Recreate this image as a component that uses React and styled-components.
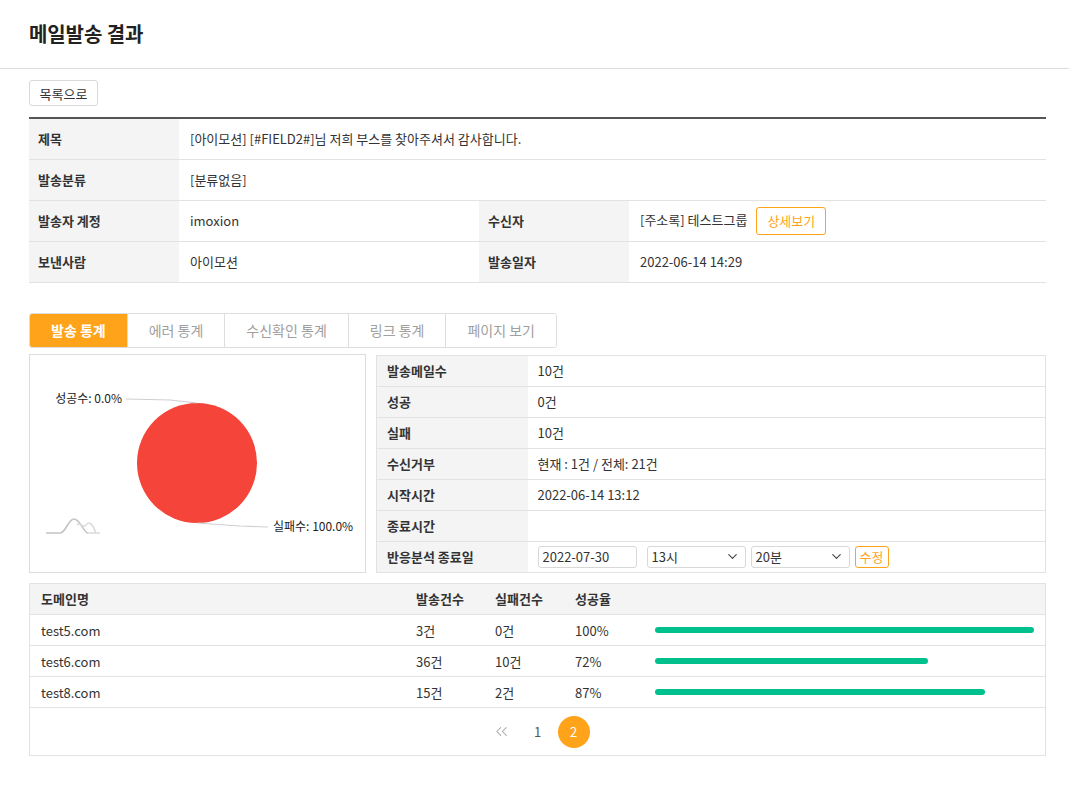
import React from "react";
import styled, { createGlobalStyle } from "styled-components";
import { ChevronDown, ChevronsLeft } from "lucide-react";

const orange = "#ffa31a";
const line = "#e2e2e2";
const labelBg = "#f4f4f4";

const GlobalStyle = createGlobalStyle`
  * { box-sizing: border-box; }
  body {
    margin: 0;
    background: #fff;
    color: #333;
    font-family: "Noto Sans CJK KR", "Noto Sans", sans-serif;
    font-size: 13px;
  }
`;

const domains = [
  { name: "test5.com", sent: "3건", fail: "0건", rate: 100 },
  { name: "test6.com", sent: "36건", fail: "10건", rate: 72 },
  { name: "test8.com", sent: "15건", fail: "2건", rate: 87 },
];

const tabs = ["발송 통계", "에러 통계", "수신확인 통계", "링크 통계", "페이지 보기"];

export default function App() {
  return (
    <>
      <GlobalStyle />
      <Header>
        <Title>메일발송 결과</Title>
      </Header>
      <Main>
        <ListButton>목록으로</ListButton>

        <InfoTable>
          <colgroup>
            <col style={{ width: 150 }} />
            <col style={{ width: 300 }} />
            <col style={{ width: 150 }} />
            <col />
          </colgroup>
          <tbody>
            <tr>
              <Th>제목</Th>
              <Td colSpan={3}>[아이모션] [#FIELD2#]님 저희 부스를 찾아주셔서 감사합니다.</Td>
            </tr>
            <tr>
              <Th>발송분류</Th>
              <Td colSpan={3}>[분류없음]</Td>
            </tr>
            <tr>
              <Th>발송자 계정</Th>
              <Td>imoxion</Td>
              <Th>수신자</Th>
              <Td>
                [주소록] 테스트그룹 <DetailButton>상세보기</DetailButton>
              </Td>
            </tr>
            <tr>
              <Th>보낸사람</Th>
              <Td>아이모션</Td>
              <Th>발송일자</Th>
              <Td>2022-06-14 14:29</Td>
            </tr>
          </tbody>
        </InfoTable>

        <Tabs>
          {tabs.map((t, i) => (
            <Tab key={t} $active={i === 0}>
              {t}
            </Tab>
          ))}
        </Tabs>

        <StatsRow>
          <ChartBox>
            <svg width="335" height="217" viewBox="0 0 335 217">
              <circle cx="167" cy="108" r="60" fill="#f5443a" />
              <polyline points="96,44 140,45 167,48" fill="none" stroke="#cfcfcf" strokeWidth="1.2" />
              <polyline points="167,168 210,171 238,172" fill="none" stroke="#cfcfcf" strokeWidth="1.2" />
              <text x="92" y="48" textAnchor="end" fontSize="12" fill="#222" fontFamily="Noto Sans CJK KR, sans-serif">
                성공수: 0.0%
              </text>
              <text x="243" y="176" fontSize="12" fill="#222" fontFamily="Noto Sans CJK KR, sans-serif">
                실패수: 100.0%
              </text>
              <path d="M16 178 H30 C36 178 38 164 44 164 C50 164 54 178 58 178" fill="none" stroke="#c4c4c4" strokeWidth="1.6" />
              <path d="M47 170 C50 166 53 174 56 170 C59 166 62 168 66 178 H70" fill="none" stroke="#dcdcdc" strokeWidth="1.6" />
              <path d="M58 178 H66" fill="none" stroke="#dcdcdc" strokeWidth="1.6" />
            </svg>
          </ChartBox>

          <StatTable>
            <colgroup>
              <col style={{ width: 151 }} />
              <col />
            </colgroup>
            <tbody>
              <tr><STh>발송메일수</STh><STd>10건</STd></tr>
              <tr><STh>성공</STh><STd>0건</STd></tr>
              <tr><STh>실패</STh><STd>10건</STd></tr>
              <tr><STh>수신거부</STh><STd>현재 : 1건 / 전체: 21건</STd></tr>
              <tr><STh>시작시간</STh><STd>2022-06-14 13:12</STd></tr>
              <tr><STh>종료시간</STh><STd></STd></tr>
              <tr>
                <STh>반응분석 종료일</STh>
                <STd>
                  <Controls>
                    <DateInput value="2022-07-30" readOnly />
                    <SelectWrap>
                      <Select defaultValue="13">
                        <option value="13">13시</option>
                      </Select>
                      <Arrow><ChevronDown size={15} strokeWidth={1.8} /></Arrow>
                    </SelectWrap>
                    <SelectWrap>
                      <Select defaultValue="20">
                        <option value="20">20분</option>
                      </Select>
                      <Arrow><ChevronDown size={15} strokeWidth={1.8} /></Arrow>
                    </SelectWrap>
                    <SmallButton>수정</SmallButton>
                  </Controls>
                </STd>
              </tr>
            </tbody>
          </StatTable>
        </StatsRow>

        <DomainBox>
          <DomainTable>
            <colgroup>
              <col style={{ width: 375 }} />
              <col style={{ width: 79 }} />
              <col style={{ width: 80 }} />
              <col style={{ width: 80 }} />
              <col />
            </colgroup>
            <thead>
              <tr>
                <DTh>도메인명</DTh>
                <DTh>발송건수</DTh>
                <DTh>실패건수</DTh>
                <DTh>성공율</DTh>
                <DTh />
              </tr>
            </thead>
            <tbody>
              {domains.map((d) => (
                <tr key={d.name}>
                  <DTd>{d.name}</DTd>
                  <DTd>{d.sent}</DTd>
                  <DTd>{d.fail}</DTd>
                  <DTd>{d.rate}%</DTd>
                  <DTd>
                    <Track>
                      <Bar style={{ width: `${d.rate}%` }} />
                    </Track>
                  </DTd>
                </tr>
              ))}
            </tbody>
          </DomainTable>
          <Pager>
            <PageArrow><ChevronsLeft size={19} strokeWidth={1.3} /></PageArrow>
            <PageNum>1</PageNum>
            <PageNum $current>2</PageNum>
          </Pager>
        </DomainBox>
      </Main>
    </>
  );
}

const Header = styled.header`
  height: 69px;
  display: flex;
  align-items: center;
  padding: 0 29px 2px;
  border-bottom: 1px solid #dedede;
`;

const Title = styled.h1`
  margin: 0;
  font-size: 20px;
  font-weight: 700;
  color: #222;
  letter-spacing: -0.1px;
`;

const Main = styled.main`
  width: 1017px;
  margin-left: 29px;
  padding-top: 11px;
`;

const ListButton = styled.button`
  height: 26px;
  width: 69px;
  padding: 0;
  border: 1px solid #d9d9d9;
  border-radius: 3px;
  background: #fff;
  color: #333;
  font-family: inherit;
  font-size: 13px;
`;

const InfoTable = styled.table`
  width: 100%;
  margin-top: 11px;
  border-collapse: collapse;
  table-layout: fixed;
  border-top: 2px solid #555;
`;

const Th = styled.th`
  height: 41px;
  padding: 0 9px;
  text-align: left;
  font-weight: 600;
  background: ${labelBg};
  border-bottom: 1px solid ${line};
  color: #333;
`;

const Td = styled.td`
  height: 41px;
  padding: 0 11px;
  border-bottom: 1px solid ${line};
  color: #333;
`;

const DetailButton = styled.button`
  height: 28px;
  width: 70px;
  padding: 0;
  margin-left: 6px;
  border: 1px solid ${orange};
  border-radius: 3px;
  background: #fff;
  color: ${orange};
  font-family: inherit;
  font-size: 13px;
  vertical-align: middle;
`;

const Tabs = styled.div`
  display: inline-flex;
  margin-top: 30px;
  height: 35px;
  border: 1px solid #ddd;
  border-radius: 3px;
  overflow: hidden;
`;

const Tab = styled.div`
  display: flex;
  align-items: center;
  padding: 0 21px;
  font-size: 14px;
  color: ${(p) => (p.$active ? "#fff" : "#a0a0a0")};
  background: ${(p) => (p.$active ? orange : "#fff")};
  font-weight: ${(p) => (p.$active ? 600 : 400)};
  &:last-child {
    padding: 0 21px;
  }
  & + & {
    border-left: 1px solid #ddd;
  }
`;

const StatsRow = styled.div`
  display: flex;
  gap: 10px;
  margin-top: 6px;
  align-items: flex-start;
`;

const ChartBox = styled.div`
  width: 337px;
  height: 219px;
  border: 1px solid #ddd;
  svg {
    display: block;
  }
`;

const StatTable = styled.table`
  flex: 1;
  margin-top: 1px;
  border-collapse: collapse;
  table-layout: fixed;
  border: 1px solid ${line};
`;

const STh = styled.th`
  height: 31px;
  padding: 0 10px;
  text-align: left;
  font-weight: 600;
  background: ${labelBg};
  border-bottom: 1px solid ${line};
`;

const STd = styled.td`
  height: 31px;
  padding: 0 10px;
  border-bottom: 1px solid ${line};
`;

const Controls = styled.div`
  display: flex;
  align-items: center;
  gap: 5px;
`;

const DateInput = styled.input`
  width: 99px;
  height: 22px;
  padding: 0 4px;
  border: 1px solid #d8d8d8;
  border-radius: 3px;
  font-family: inherit;
  font-size: 13px;
  color: #333;
  margin-right: 5px;
`;

const SelectWrap = styled.div`
  position: relative;
  width: 99px;
  height: 22px;
`;

const Select = styled.select`
  appearance: none;
  width: 100%;
  height: 100%;
  padding: 0 4px;
  border: 1px solid #d8d8d8;
  border-radius: 3px;
  background: #fff;
  font-family: inherit;
  font-size: 13px;
  color: #333;
`;

const Arrow = styled.span`
  position: absolute;
  right: 6px;
  top: 3px;
  color: #444;
  pointer-events: none;
  display: flex;
`;

const SmallButton = styled.button`
  height: 22px;
  width: 34px;
  padding: 0;
  border: 1px solid ${orange};
  border-radius: 3px;
  background: #fff;
  color: ${orange};
  font-family: inherit;
  font-size: 13px;
`;

const DomainBox = styled.div`
  margin-top: 10px;
  border: 1px solid ${line};
`;

const DomainTable = styled.table`
  width: 100%;
  border-collapse: collapse;
  table-layout: fixed;
`;

const DTh = styled.th`
  height: 31px;
  padding: 0 11px;
  text-align: left;
  font-weight: 600;
  background: ${labelBg};
  border-bottom: 1px solid ${line};
`;

const DTd = styled.td`
  height: 31px;
  padding: 0 11px;
  border-bottom: 1px solid ${line};
`;

const Track = styled.div`
  height: 6px;
`;

const Bar = styled.div`
  height: 6px;
  border-radius: 3px;
  background: #00c08e;
`;

const Pager = styled.div`
  height: 47px;
  display: flex;
  align-items: center;
  justify-content: center;
  gap: 4px;
`;

const PageArrow = styled.span`
  width: 32px;
  display: flex;
  justify-content: center;
  color: #a8a8a8;
`;

const PageNum = styled.span`
  width: 32px;
  height: 32px;
  border-radius: 50%;
  display: flex;
  align-items: center;
  justify-content: center;
  font-size: 13px;
  color: ${(p) => (p.$current ? "#fff" : "#555")};
  background: ${(p) => (p.$current ? orange : "transparent")};
`;
